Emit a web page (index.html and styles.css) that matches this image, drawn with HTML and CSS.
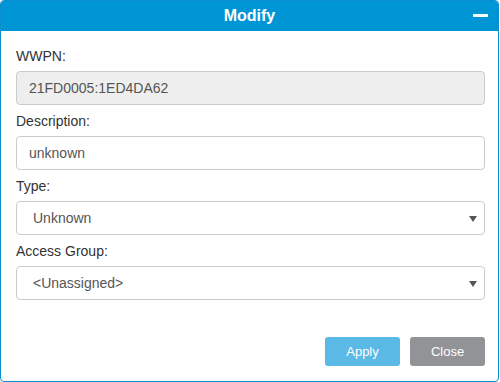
FILE: index.html
```html
<!DOCTYPE html>
<html lang="en">
<head>
    <meta charset="UTF-8">
    <meta name="viewport" content="width=device-width, initial-scale=1.0">
    <title>Modify</title>
    <link rel="stylesheet" href="styles.css">
</head>
<body>
<div class="dialog">
    <div class="dialog-header">
        <span class="dialog-title">Modify</span>
        <span class="minimize"></span>
    </div>

    <div class="dialog-body">
        <div class="field">
            <label for="wwpn">WWPN:</label>
            <input type="text" id="wwpn" value="21FD0005:1ED4DA62" disabled>
        </div>

        <div class="field">
            <label for="desc">Description:</label>
            <input type="text" id="desc" value="unknown">
        </div>

        <div class="field">
            <label for="type">Type:</label>
            <div class="select-wrap">
                <select id="type">
                    <option>Unknown</option>
                    <option>Host</option>
                    <option>Storage</option>
                </select>
            </div>
        </div>

        <div class="field">
            <label for="group">Access Group:</label>
            <div class="select-wrap">
                <select id="group">
                    <option>&lt;Unassigned&gt;</option>
                </select>
            </div>
        </div>
    </div>

    <div class="dialog-footer">
        <button class="btn btn-apply">Apply</button>
        <button class="btn btn-close">Close</button>
    </div>
</div>
</body>
</html>
```

FILE: styles.css
```css
body {
    margin: 0;
    padding: 0;
    font-family: Arial, "Liberation Sans", sans-serif;
    background-color: #ffffff;
}

.dialog {
    width: 499px;
    height: 382px;
    box-sizing: border-box;
    border: 1px solid #0a8fcc;
    border-radius: 4px;
    background-color: #ffffff;
    display: flex;
    flex-direction: column;
    overflow: hidden;
}

.dialog-header {
    position: relative;
    height: 30px;
    background-color: #0096d6;
    display: flex;
    align-items: center;
    justify-content: center;
}

.dialog-title {
    color: #ffffff;
    font-size: 16px;
    font-weight: bold;
}

/* 最小化ボタン */
.minimize {
    position: absolute;
    right: 10px;
    top: 13px;
    width: 15px;
    height: 3px;
    background-color: #ffffff;
}

.dialog-body {
    padding: 15px 13px 0 15px;
}

.field {
    margin-bottom: 6px;
}

label {
    display: block;
    font-size: 14px;
    line-height: 20px;
    color: #333333;
    margin-bottom: 5px;
}

input, select {
    display: block;
    width: 100%;
    height: 34px;
    box-sizing: border-box;
    border: 1px solid #cccccc;
    border-radius: 4px;
    font-family: Arial, "Liberation Sans", sans-serif;
    font-size: 14px;
    color: #555555;
    background-color: #ffffff;
    outline: none;
}

input {
    padding: 0 12px;
}

input:disabled {
    background-color: #eeeeee;
    color: #555555;
}

select {
    padding: 0 24px 0 16px;
    appearance: none;
    -webkit-appearance: none;
}

.select-wrap {
    position: relative;
}

/* セレクトの三角 */
.select-wrap::after {
    content: "";
    position: absolute;
    right: 8px;
    top: 15px;
    border-left: 4px solid transparent;
    border-right: 4px solid transparent;
    border-top: 6px solid #555555;
    pointer-events: none;
}

.dialog-footer {
    margin-top: auto;
    padding: 0 13px 15px 15px;
    display: flex;
    justify-content: flex-end;
    gap: 10px;
}

.btn {
    width: 75px;
    height: 29px;
    border: none;
    border-radius: 3px;
    color: #ffffff;
    font-family: Arial, "Liberation Sans", sans-serif;
    font-size: 13px;
    cursor: pointer;
}

.btn-apply {
    background-color: #5bb9e5;
}

.btn-close {
    background-color: #929397;
}
```
